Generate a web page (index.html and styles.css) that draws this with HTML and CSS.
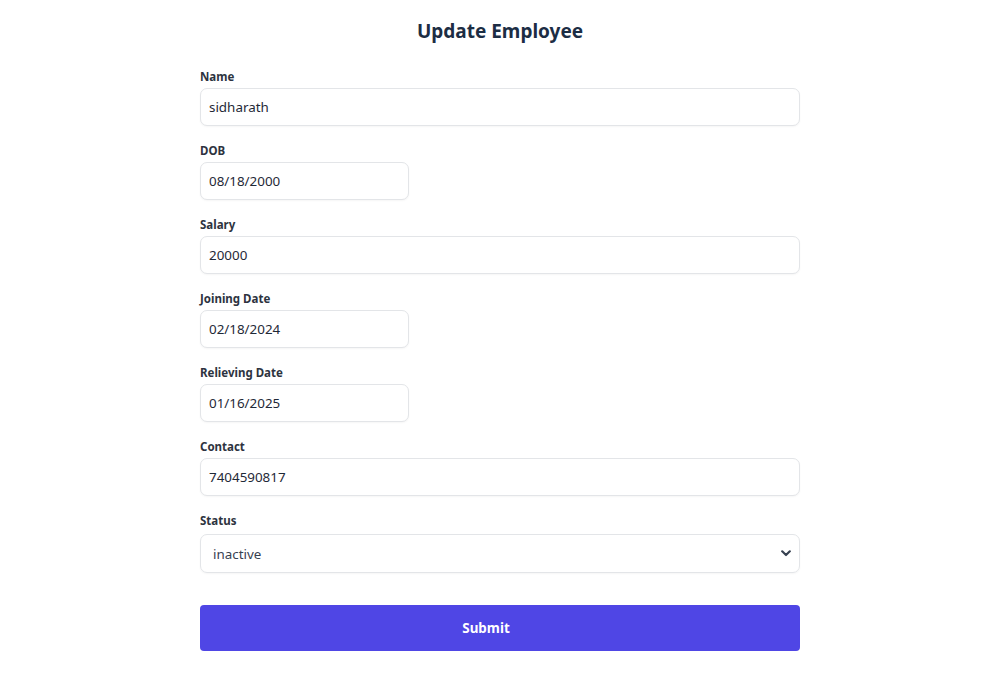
FILE: index.html
```html
<!DOCTYPE html>
<html lang="en">
<head>
<meta charset="utf-8">
<title>Update Employee</title>
<link rel="stylesheet" href="styles.css">
</head>
<body>
<main class="page">
  <h2 class="title">Update Employee</h2>
  <form class="form">
    <div class="field">
      <label class="label">Name</label>
      <input class="input" type="text" value="sidharath">
    </div>
    <div class="field">
      <label class="label">DOB</label>
      <input class="input input-date" type="text" value="08/18/2000">
    </div>
    <div class="field">
      <label class="label">Salary</label>
      <input class="input" type="text" value="20000">
    </div>
    <div class="field">
      <label class="label">Joining Date</label>
      <input class="input input-date" type="text" value="02/18/2024">
    </div>
    <div class="field">
      <label class="label">Relieving Date</label>
      <input class="input input-date" type="text" value="01/16/2025">
    </div>
    <div class="field">
      <label class="label">Contact</label>
      <input class="input" type="text" value="7404590817">
    </div>
    <div class="field">
      <label class="label">Status</label>
      <div class="select">
        <span class="select-value">inactive</span>
        <svg class="chevron" width="10" height="7" viewBox="0 0 10 7"><path d="M1.2 1.3 L5 5 L8.8 1.3" fill="none" stroke="#374151" stroke-width="2.2" stroke-linecap="round" stroke-linejoin="round"/></svg>
      </div>
    </div>
    <button class="submit" type="button">Submit</button>
  </form>
</main>
</body>
</html>
```

FILE: styles.css
```css
* { box-sizing: border-box; }
html, body { margin: 0; padding: 0; background: #ffffff; }
body {
  font-family: "Noto Sans", "Open Sans", "Liberation Sans", sans-serif;
  color: #1f2937;
}
.page {
  width: 600px;
  margin: 0 auto;
  padding-top: 17px;
}
.title {
  margin: 0 0 24px;
  text-align: center;
  font-size: 19px;
  line-height: 28px;
  font-weight: 700;
  color: #1c2d44;
}
.form { display: flex; flex-direction: column; }
.field {
  display: flex;
  flex-direction: column;
  align-items: flex-start;
  margin-bottom: 17px;
}
.label {
  font-size: 11.5px;
  line-height: 16px;
  font-weight: 700;
  color: #2d3340;
  margin-bottom: 3px;
}
.input {
  width: 100%;
  height: 38px;
  padding: 0 8px;
  border: 1px solid #e3e5e8;
  border-radius: 7px;
  font-family: inherit;
  font-size: 13.4px;
  color: #1f2937;
  background: #fff;
  box-shadow: 0 1px 2px rgba(0,0,0,0.04);
  outline: none;
}
.input-date { width: 209px; }
.select {
  width: 100%;
  height: 39px;
  margin-top: 2px;
  padding: 0 8px 0 12px;
  border: 1px solid #e3e5e8;
  border-radius: 7px;
  display: flex;
  align-items: center;
  justify-content: space-between;
  font-size: 13.4px;
  color: #374151;
  box-shadow: 0 1px 2px rgba(0,0,0,0.04);
}
.chevron { display: block; }
.submit {
  margin-top: 15px;
  width: 100%;
  height: 46px;
  padding: 0 28px 0 0;
  border: none;
  border-radius: 4px;
  background: #4f46e5;
  color: #fff;
  font-family: inherit;
  font-size: 13.4px;
  font-weight: 700;
}
```
